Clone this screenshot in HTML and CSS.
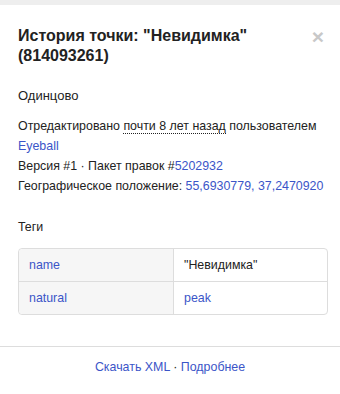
FILE: index.html
```html
<!DOCTYPE html>
<html lang="ru">
  <head>
    <meta charset="UTF-8" />
    <title>История точки</title>
    <link rel="stylesheet" href="styles.css">
  </head>
  <body>
    <div class="topbar"></div>
    <div class="sidebar">
      <div class="header">
        <h2>История точки: "Невидимка" (814093261)</h2>
        <a class="close" href="#">&times;</a>
      </div>
      <div class="content">
        <p class="comment">Одинцово</p>
        <div class="details">
          Отредактировано <abbr title="2015">почти 8 лет назад</abbr> пользователем
          <a href="#">Eyeball</a><br />
          Версия #1 · Пакет правок #<a href="#">5202932</a><br />
          Географическое положение: <a href="#">55,6930779, 37,2470920</a>
        </div>

        <h4>Теги</h4>
        <table class="tags">
          <tr>
            <th><a href="#">name</a></th>
            <td>"Невидимка"</td>
          </tr>
          <tr>
            <th><a href="#">natural</a></th>
            <td><a href="#">peak</a></td>
          </tr>
        </table>
      </div>
      <div class="footer">
        <a href="#">Скачать XML</a> · <a href="#">Подробнее</a>
      </div>
    </div>
  </body>
</html>
```

FILE: styles.css
```css
body {
  font-family: "Liberation Sans", Arial, sans-serif;
  font-size: 12.4px;
  margin: 0;
  padding: 0;
  color: #222;
  background: #fff;
}
a {
  color: #3b55c8;
  text-decoration: none;
}
.topbar {
  height: 5px;
  background-color: #eee;
}
.header {
  display: flex;
  justify-content: space-between;
  align-items: flex-start;
  padding: 21px 16px 0 18px;
}
.header h2 {
  margin: 0;
  font-size: 16px;
  line-height: 20px;
  font-weight: bold;
  width: 260px;
}
.close {
  color: #c8c8c8;
  font-size: 21px;
  font-weight: bold;
  line-height: 22px;
}
.content {
  padding: 0 12px 0 18px;
}
.comment {
  margin: 20px 0 0 0;
  font-size: 13px;
  line-height: 20px;
}
.details {
  margin-top: 10px;
  line-height: 20px;
}
abbr {
  text-decoration: none;
  border-bottom: 1px dotted #222;
}
h4 {
  margin: 21px 0 0 0;
  font-size: 12.4px;
  font-weight: normal;
  line-height: 20px;
}
.tags {
  margin-top: 11px;
  width: 310px;
  border-collapse: separate;
  border-spacing: 0;
  border: 1px solid #ddd;
  border-radius: 4px;
}
.tags th,
.tags td {
  height: 32px;
  padding: 0 10px;
  text-align: left;
  font-weight: normal;
}
.tags th {
  width: 134px;
  background-color: #f6f6f6;
  border-right: 1px solid #ddd;
}
.tags tr:first-child th,
.tags tr:first-child td {
  border-bottom: 1px solid #ddd;
}
.tags tr:first-child th {
  border-top-left-radius: 4px;
}
.tags tr:last-child th {
  border-bottom-left-radius: 4px;
}
.footer {
  margin-top: 31px;
  border-top: 1px solid #ddd;
  padding-top: 12px;
  text-align: center;
  line-height: 16px;
}
```
